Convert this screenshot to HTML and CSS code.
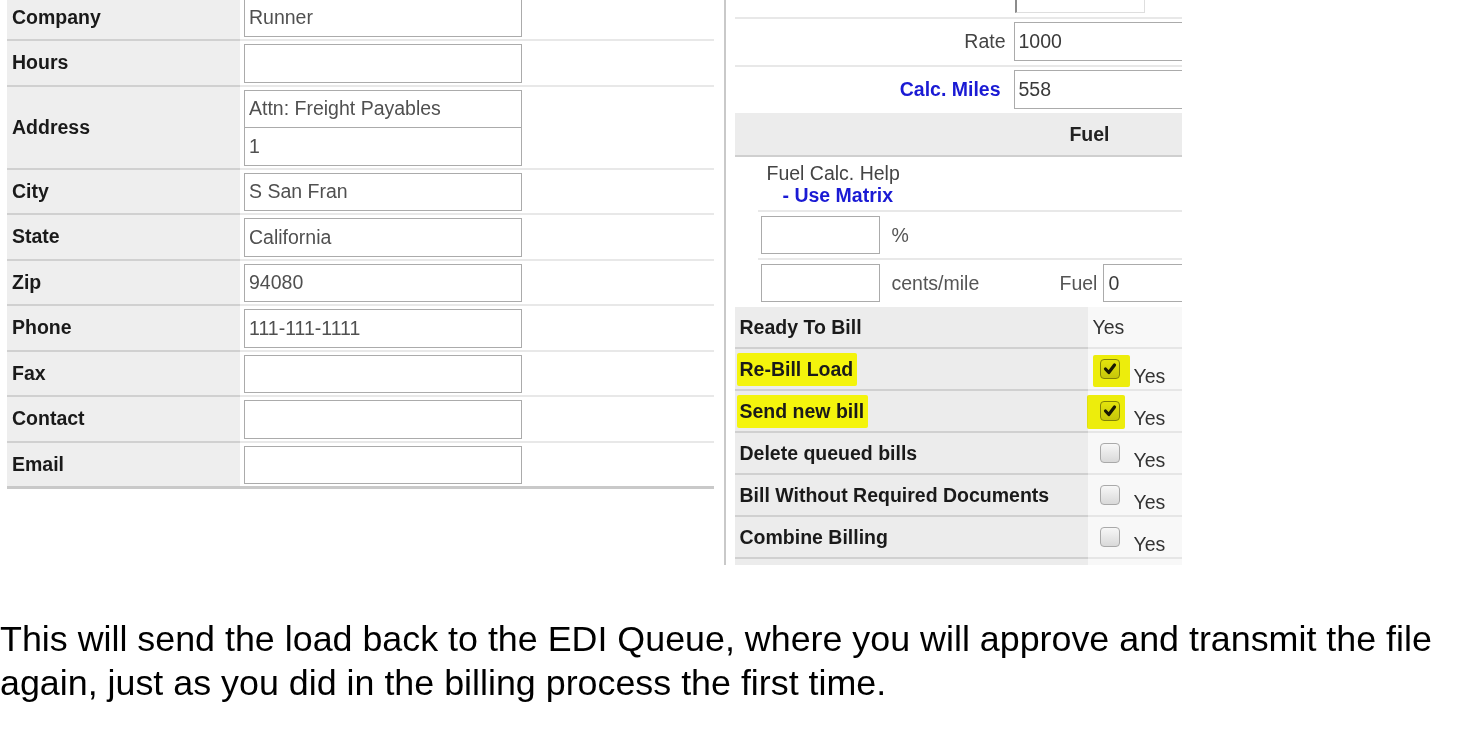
FILE: index.html
```html
<!DOCTYPE html>
<html lang="en">
  <head>
    <meta charset="UTF-8" />
    <meta name="viewport" content="width=device-width, initial-scale=1.0" />
    <title>Re-Bill Load</title>
    <link rel="stylesheet" href="styles.css">
  </head>
  <body>
    <div class="sheet">
      <!-- bill-to contact block -->
      <div class="contact">
        <div class="field">
          <div class="label">Company</div>
          <div class="value"><input type="text" value="Runner" /></div>
        </div>
        <div class="field">
          <div class="label">Hours</div>
          <div class="value"><input type="text" /></div>
        </div>
        <div class="field">
          <div class="label">Address</div>
          <div class="value">
            <input type="text" value="Attn: Freight Payables" />
            <input type="text" value="1" />
          </div>
        </div>
        <div class="field">
          <div class="label">City</div>
          <div class="value"><input type="text" value="S San Fran" /></div>
        </div>
        <div class="field">
          <div class="label">State</div>
          <div class="value"><input type="text" value="California" /></div>
        </div>
        <div class="field">
          <div class="label">Zip</div>
          <div class="value"><input type="text" value="94080" /></div>
        </div>
        <div class="field">
          <div class="label">Phone</div>
          <div class="value"><input type="text" value="111-111-1111" /></div>
        </div>
        <div class="field">
          <div class="label">Fax</div>
          <div class="value"><input type="text" /></div>
        </div>
        <div class="field">
          <div class="label">Contact</div>
          <div class="value"><input type="text" /></div>
        </div>
        <div class="field">
          <div class="label">Email</div>
          <div class="value"><input type="text" /></div>
        </div>
      </div>

      <!-- rate, fuel and billing flags -->
      <div class="billing">
        <div class="panel">
          <div class="line">
            <span class="line-label"></span>
            <input class="short" type="text" />
          </div>
          <div class="line">
            <span class="line-label">Rate</span>
            <input type="text" value="1000" />
          </div>
          <div class="line last">
            <span class="line-label"><a class="link miles">Calc. Miles</a></span>
            <input type="text" value="558" />
          </div>

          <div class="section">Fuel</div>

          <div class="fuel">
            <div class="help">
              Fuel Calc. Help<br /><a class="link matrix">- Use Matrix</a>
            </div>
            <div class="fuel-row">
              <input class="small" type="text" />
              <span class="unit">%</span>
            </div>
            <div class="fuel-row last">
              <input class="small" type="text" />
              <span class="unit wide">cents/mile</span>
              <span class="fuel-label">Fuel</span>
              <input class="amount" type="text" value="0" />
            </div>
          </div>

          <div class="flag">
            <div class="flag-label">Ready To Bill</div>
            <div class="flag-value plain">Yes</div>
          </div>
          <div class="flag">
            <div class="flag-label"><span class="hl">Re-Bill Load</span></div>
            <div class="flag-value">
              <span class="box checked mark-a">
                <svg viewBox="0 0 18 18"><polyline points="4.5,9 7.8,12.5 13.5,5" /></svg>
              </span>
              <span class="yes">Yes</span>
            </div>
          </div>
          <div class="flag">
            <div class="flag-label"><span class="hl">Send new bill</span></div>
            <div class="flag-value">
              <span class="box checked mark-b">
                <svg viewBox="0 0 18 18"><polyline points="4.5,9 7.8,12.5 13.5,5" /></svg>
              </span>
              <span class="yes">Yes</span>
            </div>
          </div>
          <div class="flag">
            <div class="flag-label">Delete queued bills</div>
            <div class="flag-value"><span class="box"></span><span class="yes">Yes</span></div>
          </div>
          <div class="flag">
            <div class="flag-label">Bill Without Required Documents</div>
            <div class="flag-value"><span class="box"></span><span class="yes">Yes</span></div>
          </div>
          <div class="flag">
            <div class="flag-label">Combine Billing</div>
            <div class="flag-value"><span class="box"></span><span class="yes">Yes</span></div>
          </div>
          <div class="flag">
            <div class="flag-label"></div>
            <div class="flag-value"></div>
          </div>
        </div>
      </div>
    </div>

    <p class="note">
      This will send the load back to the EDI Queue, where you will approve and
      transmit the file again, just as you did in the billing process the first
      time.
    </p>
  </body>
</html>
```

FILE: styles.css
```css
:root {
  --label-bg: #eeeeee;
  --label-line: #d0d0d0;
  --soft-line: #e8e8e8;
  --input-border: #ababab;
  --link-color: #1a1ad4;
  --marker: #f4f40c;
}

* {
  box-sizing: border-box;
}

body {
  margin: 0;
  font-family: 'Liberation Sans', Arial, sans-serif;
  font-size: 19.5px;
  color: #222;
  background: #fff;
}

input {
  display: block;
  height: 38.5px;
  padding: 0 4px;
  border: 1.5px solid var(--input-border);
  background: #fff;
  font: inherit;
  color: #505050;
}

.link {
  color: var(--link-color);
  font-weight: bold;
}

.sheet {
  display: flex;
  align-items: flex-start;
  height: 565px;
  overflow: hidden;
}

/* contact block */

.contact {
  width: 707px;
  margin: -4.5px 0 0 7px;
  border-bottom: 3px solid #c9c9c9;
  flex-shrink: 0;
}

.field {
  display: flex;
}

.label {
  width: 233px;
  display: flex;
  align-items: center;
  padding-left: 5px;
  background: var(--label-bg);
  border-bottom: 2px solid var(--label-line);
  font-weight: bold;
  color: #1a1a1a;
}

.value {
  flex: 1;
  padding: 3px 4px 2px;
  border-bottom: 2px solid var(--soft-line);
}

.value input {
  width: 278px;
}

.value input + input {
  margin-top: -1px;
}

.field:last-child .label,
.field:last-child .value {
  border-bottom: 0;
}

/* billing panel */

.billing {
  width: 447px;
  height: 565px;
  margin-left: 10px;
  padding-left: 8.5px;
  border-left: 2.5px solid #c9c9c9;
  box-sizing: content-box;
  overflow: hidden;
  flex-shrink: 0;
}

.panel {
  width: 710px;
  margin-top: -29px;
}

.line {
  display: flex;
  align-items: center;
  padding: 3px 0 4px;
  border-bottom: 2px solid var(--soft-line);
}

.line.last {
  border-bottom: 0;
}

.line-label {
  width: 275px;
  padding-right: 4px;
  text-align: right;
  color: #444;
}

.line input {
  width: 420px;
  height: 39px;
  margin-left: 4px;
  color: #3a3a3a;
}

.line input.short {
  width: 130px;
  margin-left: 5px;
  border-color: #dedede;
  border-left: 2px solid #8c8c8c;
}

.miles {
  margin-right: 5px;
}

.section {
  height: 44px;
  line-height: 43px;
  text-align: center;
  font-weight: bold;
  background: #ececec;
  border-bottom: 2px solid #cfcfcf;
}

.fuel {
  margin-left: 23px;
}

.help {
  padding: 5px 0 4px 9px;
  line-height: 22px;
  color: #444;
  border-bottom: 2px solid var(--soft-line);
}

.matrix {
  margin-left: 16px;
}

.fuel-row {
  display: flex;
  align-items: center;
  padding: 4px 0 4px 3px;
  border-bottom: 2px solid var(--soft-line);
  color: #555;
}

.fuel-row.last {
  padding-bottom: 5px;
  border-bottom: 0;
}

.fuel-row input.small {
  width: 119px;
  height: 38px;
}

.unit {
  margin-left: 12px;
}

.unit.wide {
  width: 168px;
}

.fuel-row input.amount {
  width: 300px;
  height: 38px;
  margin-left: 6px;
  color: #3a3a3a;
}

/* yes/no flags */

.flag {
  display: flex;
  height: 42px;
}

.flag-label {
  width: 353px;
  display: flex;
  align-items: center;
  padding-left: 5px;
  background: #ececec;
  border-bottom: 2px solid var(--label-line);
  font-weight: bold;
  color: #1a1a1a;
}

.flag-value {
  flex: 1;
  display: flex;
  align-items: flex-start;
  padding-left: 12px;
  background: #f8f8f8;
  border-bottom: 2px solid #e6e6e6;
  color: #333;
}

.flag-value.plain {
  align-items: center;
  padding-left: 5px;
}

.hl {
  margin-left: -3px;
  padding: 5px 4px 5px 3px;
  background: var(--marker);
  border-radius: 2px;
}

.box {
  position: relative;
  width: 20px;
  height: 20px;
  margin-top: 10px;
  border: 1px solid #a9a9a9;
  border-radius: 4px;
  background: linear-gradient(#f7f7f7, #d9d9d9);
  flex-shrink: 0;
}

.box.checked {
  border-color: #8a8a8a;
  background: linear-gradient(#efefef, #cfcfcf);
}

.box svg {
  display: block;
  width: 18px;
  height: 18px;
}

.box polyline {
  fill: none;
  stroke: #1a1a1a;
  stroke-width: 3.2;
  stroke-linecap: round;
  stroke-linejoin: round;
}

/* marker pen stroke over the checkbox */
.box.mark-a::after,
.box.mark-b::after {
  content: '';
  position: absolute;
  background: var(--marker);
  mix-blend-mode: multiply;
  border-radius: 2px;
}

.box.mark-a::after {
  left: -8px;
  right: -11px;
  top: -5px;
  bottom: -9px;
}

.box.mark-b::after {
  left: -14px;
  right: -6px;
  top: -7px;
  bottom: -9px;
}

.yes {
  margin: 16px 0 0 14px;
  line-height: 22px;
}

.note {
  margin: 51.5px 0 0;
  font-size: 35.85px;
  line-height: 44px;
  color: #000;
}
```
